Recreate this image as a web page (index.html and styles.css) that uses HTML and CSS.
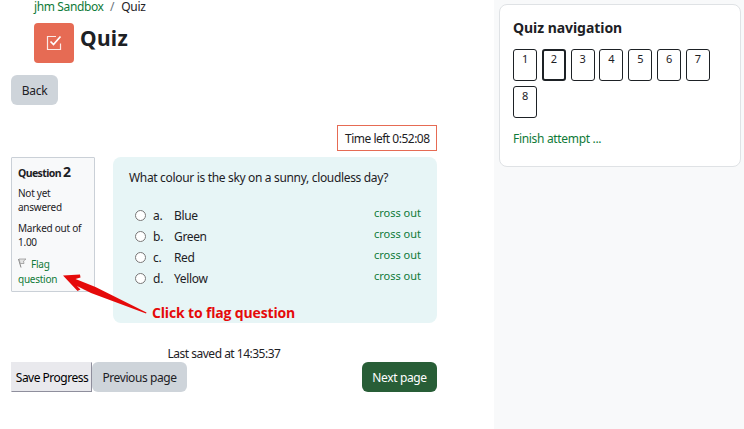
FILE: index.html
```html
<!DOCTYPE html>
<html lang="en">
<head>
<meta charset="utf-8">
<title>Quiz</title>
<link rel="stylesheet" href="styles.css">
</head>
<body>
<div class="page">
  <main class="main">
    <nav class="crumbs"><a class="crumb-link" href="#">jhm Sandbox</a><span class="sep">/</span><span class="crumb-here">Quiz</span></nav>
    <header class="heading">
      <span class="activity-icon">
        <svg width="16" height="16" viewBox="0 0 16 16" fill="none" stroke="#fff"><path d="M10 1.500H1.500v13h13V8.500" stroke-width="1.2" opacity=".85"/><path d="M4.500 6.500l3 3L14.500 1.500" stroke-width="1.7"/></svg>
      </span>
      <h1 class="title">Quiz</h1>
    </header>
    <button class="btn back">Back</button>
    <div class="timer">Time left 0:52:08</div>
    <section class="question">
      <aside class="info">
        <h3 class="qno">Question <span class="num">2</span></h3>
        <div class="state">Not yet<br>answered</div>
        <div class="grade">Marked out of<br>1.00</div>
        <a class="flag" href="#"><svg class="flag-icon" width="9" height="10" viewBox="0 0 9 10" fill="none"><path d="M.5 1l2.500 8.500" stroke="#858585"/><path d="M1 1h7L5.500 3l.5 2.500H2.200z" fill="#e4e4e4" stroke="#999" stroke-width=".8"/></svg>Flag<br>question</a>
      </aside>
      <div class="formulation">
        <p class="qtext">What colour is the sky on a sunny, cloudless day?</p>
        <div class="answers">
          <label class="answer"><input type="radio" name="a"><span class="letter">a.</span><span class="opt">Blue</span><a class="cross" href="#">cross out</a></label>
          <label class="answer"><input type="radio" name="a"><span class="letter">b.</span><span class="opt">Green</span><a class="cross" href="#">cross out</a></label>
          <label class="answer"><input type="radio" name="a"><span class="letter">c.</span><span class="opt">Red</span><a class="cross" href="#">cross out</a></label>
          <label class="answer"><input type="radio" name="a"><span class="letter">d.</span><span class="opt">Yellow</span><a class="cross" href="#">cross out</a></label>
        </div>
      </div>
      <svg class="arrow" width="86" height="44" viewBox="0 0 86 44"><path d="M0 1.500L17 .5l.5 3-5 1.500 20 8 51 25.500-.5 1L28 19 14 12l3.500 3.500-3 1.500z" fill="#e50a0a"/></svg>
      <strong class="callout">Click to flag question</strong>
    </section>
    <div class="saved">Last saved at 14:35:37</div>
    <div class="actions">
      <button class="save">Save Progress</button>
      <button class="btn prev">Previous page</button>
      <button class="btn next">Next page</button>
    </div>
  </main>
  <aside class="drawer">
    <section class="card">
      <h2 class="card-title">Quiz navigation</h2>
      <div class="numbers">
        <a class="n">1</a><a class="n current">2</a><a class="n">3</a><a class="n">4</a><a class="n">5</a><a class="n">6</a><a class="n">7</a><a class="n">8</a>
      </div>
      <a class="finish" href="#">Finish attempt ...</a>
    </section>
  </aside>
</div>
</body>
</html>
```
FILE: styles.css
```css
* { box-sizing: border-box; }
body { margin: 0; background: #fff; color: #1d2125; font: 12px/18px "Noto Sans", "Open Sans", sans-serif; letter-spacing: -.25px; }
a { color: #0f7a38; text-decoration: none; }
h1, h2, h3, p { margin: 0; }
button { font: inherit; letter-spacing: inherit; color: inherit; padding: 2px 0 0; border: 0; white-space: nowrap; }
.page { display: flex; width: 744px; height: 429px; overflow: hidden; }
.main { width: 494px; padding: 0 57px 0 11px; display: flex; flex-direction: column; }
.crumbs { height: 12px; line-height: 13px; margin-left: 23px; display: flex; white-space: nowrap; letter-spacing: -.3px; }
.crumb-link { letter-spacing: -.38px; }
.sep { color: #6a737b; margin: 0 7px 0 6.500px; }
.heading { display: flex; margin: 11px 0 0 23px; height: 40px; }
.activity-icon { width: 40px; height: 40px; border-radius: 4px; background: #e66b54; display: flex; align-items: center; justify-content: center; }
.title { font-size: 21px; line-height: 31px; margin-left: 6px; letter-spacing: .3px; }
.btn { height: 30px; border-radius: 6px; background: #ced4da; }
.back { width: 47px; margin-top: 12px; }
.timer { align-self: flex-end; width: 100px; height: 26px; margin-top: 20px; padding-left: 7px; border: 1px solid #e66b54; line-height: 26px; letter-spacing: -.5px; white-space: nowrap; }
.question { position: relative; display: flex; justify-content: space-between; margin-top: 6px; height: 166px; }
.info { width: 84px; height: 135px; padding: 5px 6px; border: 1px solid #cad0d7; border-radius: 1px; background: #f8f9fa; font-size: 10px; line-height: 14px; white-space: nowrap; }
.qno { font-size: 10.500px; line-height: 18px; letter-spacing: -.6px; }
.num { font-size: 14px; }
.state { margin-top: 4px; }
.grade { margin-top: 7px; }
.flag { display: block; margin-top: 8px; line-height: 15px; }
.flag-icon { margin-right: 4px; }
.formulation { width: 324px; padding: 12px 16px; border-radius: 8px; background: #e7f5f6; }
.qtext { line-height: 18px; letter-spacing: -.33px; white-space: nowrap; }
.answers { margin-top: 18px; }
.answer { display: flex; height: 21px; align-items: center; }
.answer input { width: 11px; height: 11px; margin: -1px 7px 0 6px; }
.letter { width: 21px; }
.opt { letter-spacing: -.35px; }
.cross { margin: -5px 0 0 auto; font-size: 11px; letter-spacing: 0; }
.arrow { position: absolute; left: 52px; top: 117px; }
.callout { position: absolute; left: 141px; top: 147px; color: #e50a0a; font: bold 14px/18px "Open Sans", sans-serif; letter-spacing: -.16px; white-space: nowrap; }
.saved { margin-top: 22px; height: 17px; text-align: center; letter-spacing: -.5px; }
.actions { display: flex; }
.save { width: 81px; height: 30px; padding-left: 1px; background: #e9e9ed; border: 1px solid; border-color: #e9e9ed #8f8f9d #8f8f9d #e9e9ed; color: #000; letter-spacing: -.5px; }
.prev { width: 95px; letter-spacing: -.42px; }
.next { width: 75px; margin-left: auto; background: #285e37; color: #fff; letter-spacing: -.38px; }
.drawer { width: 250px; padding: 4px 3px 0 5px; background: #f8f9fa; }
.card { height: 163px; padding: 13px; border: 1px solid #dfe2e5; border-radius: 8px; background: #fff; }
.card-title { font-size: 14px; line-height: 20px; letter-spacing: -.05px; }
.numbers { display: flex; flex-wrap: wrap; gap: 5px 4.800px; margin-top: 11px; }
.n { width: 24px; height: 32px; border: 1px solid #1d2125; border-radius: 3px; color: #1d2125; font-size: 11px; line-height: 17px; text-align: center; }
.current { border-width: 2px; line-height: 15px; }
.finish { display: block; margin-top: 12px; letter-spacing: -.32px; }
```
